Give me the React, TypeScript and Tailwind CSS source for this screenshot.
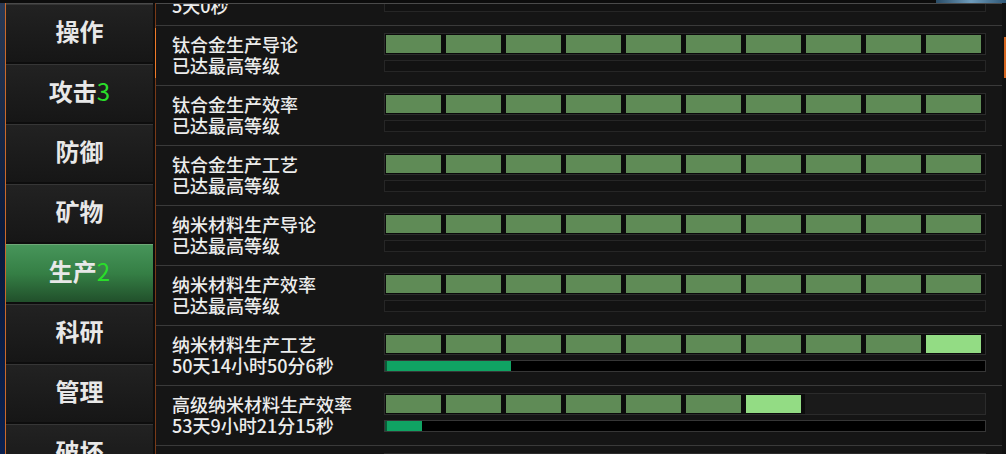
import React from "react";

type TechRow = {
  title: string;
  status: string;
  filled: number;
  bright: number; // index of light segment, -1 when none
  progress: string; // width class of the progress fill, "" when maxed
};

const tabs = [
  { label: "操作", badge: "" },
  { label: "攻击", badge: "3" },
  { label: "防御", badge: "" },
  { label: "矿物", badge: "" },
  { label: "生产", badge: "2", active: true },
  { label: "科研", badge: "" },
  { label: "管理", badge: "" },
  { label: "破坏", badge: "" },
];

const rows: TechRow[] = [
  { title: "钛合金高级工艺", status: "5天0秒", filled: 10, bright: -1, progress: "" },
  { title: "钛合金生产导论", status: "已达最高等级", filled: 10, bright: -1, progress: "" },
  { title: "钛合金生产效率", status: "已达最高等级", filled: 10, bright: -1, progress: "" },
  { title: "钛合金生产工艺", status: "已达最高等级", filled: 10, bright: -1, progress: "" },
  { title: "纳米材料生产导论", status: "已达最高等级", filled: 10, bright: -1, progress: "" },
  { title: "纳米材料生产效率", status: "已达最高等级", filled: 10, bright: -1, progress: "" },
  { title: "纳米材料生产工艺", status: "50天14小时50分6秒", filled: 10, bright: 9, progress: "w-[126px]" },
  { title: "高级纳米材料生产效率", status: "53天9小时21分15秒", filled: 7, bright: 6, progress: "w-[37px]" },
  { title: "高级纳米材料生产工艺", status: "未解锁", filled: 0, bright: -1, progress: "" },
];

const font = { fontFamily: '"Noto Sans CJK SC", "Noto Sans", sans-serif' };

const SideTab: React.FC<{ label: string; badge: string; active?: boolean }> = ({
  label,
  badge,
  active,
}) => (
  <div
    className={`h-[58px] shrink-0 flex items-center justify-center pb-[5px] border-t ${
      active
        ? "bg-gradient-to-b from-[#47955a] via-[#357f45] to-[#21502b] border-[#6fa878]"
        : "bg-gradient-to-b from-[#222222] to-[#161616] border-[#363636]"
    }`}
  >
    <span className="text-[24px] leading-none font-semibold text-[#e8e8e8]">
      {label}
      {badge && <span className="text-[#2add2a] font-normal">{badge}</span>}
    </span>
  </div>
);

const Segments: React.FC<{ filled: number; bright: number }> = ({ filled, bright }) => (
  <div className="flex h-[22px] border border-[#2b2b2b] bg-[#1a1a1a]">
    {Array.from({ length: 10 }).map((_, i) => {
      if (i >= filled) return <div key={i} className="w-[60px] shrink-0" />;
      return (
        <div key={i} className="w-[60px] shrink-0 bg-[#0b0b0b] pl-[1px] pr-[4px] py-[1px]">
          <div
            className={`h-full ${i === bright ? "bg-[#93dc84]" : "bg-[#5f8b56]"}`}
          />
        </div>
      );
    })}
  </div>
);

const Row: React.FC<{ row: TechRow }> = ({ row }) => {
  const running = row.progress !== "";
  return (
    <div className="h-[60px] shrink-0 flex border-b border-[#3a3a3a] bg-[#151515]">
      <div className="w-[228px] pl-4 pt-[8px] text-[18px] leading-[21px] font-medium text-[#ececec]">
        <div className="whitespace-nowrap">{row.title}</div>
        <div className="whitespace-nowrap">{row.status}</div>
      </div>
      <div className="w-[602px] pt-[7px] flex flex-col gap-[5px]">
        <Segments filled={row.filled} bright={row.bright} />
        <div
          className={`h-[12px] border flex ${
            running ? "bg-black border-[#363636]" : "bg-[#121212] border-[#262626]"
          }`}
        >
          {running && (
            <div className={`${row.progress} h-full bg-[#10a363] border-l-2 border-[#0a5c38]`} />
          )}
        </div>
      </div>
    </div>
  );
};

export default function App() {
  return (
    <div className="w-[1006px] h-[454px] overflow-hidden bg-[#0e0e0e] flex flex-col" style={font}>
      <div className="h-[3px] shrink-0 flex bg-[#0c0c0c]">
        <div className="flex-1" />
        <div className="w-[70px] bg-gradient-to-r from-[#2a4d68] via-[#6e9cbc] to-[#2f5877]" />
      </div>
      <div className="flex-1 flex min-h-0">
        <div className="w-[5px] bg-gradient-to-b from-[#2a3a55] via-[#0a1a3c] to-[#0b2150]" />
        <div className="w-[1px] bg-[#c9692b]" />
        <div className="w-[147px] flex flex-col gap-[2px] bg-[#0d0d0d] border-t border-[#4a4a4a]">
          {tabs.map((t) => (
            <SideTab key={t.label} label={t.label} badge={t.badge} active={t.active} />
          ))}
        </div>
        <div className="w-[2px] bg-[#0d0d0d]" />
        <div className="w-[1px] flex flex-col bg-[#7a3a18]">
          <div className="h-[25px]" />
          <div className="h-[50px] bg-[#f07a28]" />
        </div>
        <div className="flex-1 overflow-hidden border-t border-[#4a4a4a] bg-[#151515]">
          <div className="flex flex-col -mt-[38px]">
            {rows.map((r) => (
              <Row key={r.title} row={r} />
            ))}
          </div>
        </div>
        <div className="w-[4px] flex flex-col bg-[#111111]">
          <div className="h-[34px]" />
          <div className="h-[41px] ml-[2px] bg-[#d4651f]" />
        </div>
      </div>
    </div>
  );
}
